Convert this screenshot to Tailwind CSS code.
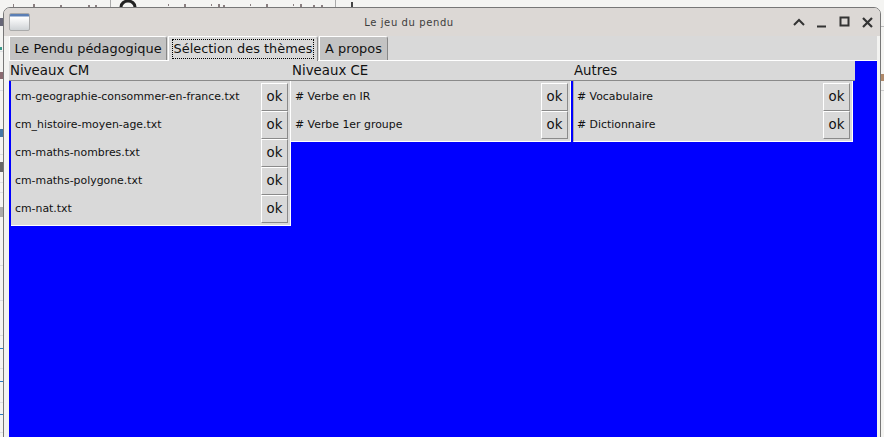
<!DOCTYPE html>
<html>
<head>
<meta charset="utf-8">
<script src="https://cdn.jsdelivr.net/npm/@tailwindcss/browser@4"></script>
</head>
<body class="relative w-[884px] h-[437px] overflow-hidden bg-[#f4f4f2] font-['DejaVu_Sans',sans-serif]">
<!-- desktop behind -->
<svg class="absolute left-0 top-0" width="884" height="437">
  <g fill="#8a7f80">
    <rect x="13" y="4" width="1" height="3"/><rect x="33" y="4" width="2" height="3"/><rect x="60" y="5" width="2" height="2"/>
    <rect x="88" y="5" width="2" height="2"/><rect x="95" y="5" width="2" height="2"/><rect x="168" y="4" width="1" height="2"/>
    <rect x="184" y="4" width="2" height="3"/><rect x="211" y="4" width="1" height="2"/><rect x="218" y="4" width="2" height="3"/>
    <rect x="223" y="5" width="2" height="2"/><rect x="250" y="4" width="1" height="2"/><rect x="266" y="4" width="2" height="3"/>
    <rect x="293" y="4" width="1" height="2"/><rect x="300" y="4" width="2" height="3"/><rect x="313" y="5" width="2" height="2"/><rect x="321" y="5" width="2" height="2"/>
  </g>
  <rect x="110" y="0" width="1" height="7" fill="#aaa"/>
  <path d="M121 7 A7 6 0 0 1 135 7" fill="none" stroke="#222" stroke-width="3"/>
  <rect x="335" y="0" width="1" height="7" fill="#aaa"/>
  <rect x="351" y="2" width="2" height="5" fill="#444"/>
  <g fill="#dcdfe2">
    <rect x="0" y="51" width="3" height="1"/><rect x="0" y="90" width="3" height="1"/><rect x="0" y="154" width="3" height="1"/>
    <rect x="0" y="182" width="3" height="1"/><rect x="0" y="192" width="3" height="1"/>
    <rect x="0" y="265" width="3" height="1"/><rect x="0" y="300" width="3" height="1"/><rect x="0" y="335" width="3" height="1"/><rect x="0" y="368" width="3" height="1"/><rect x="0" y="402" width="3" height="1"/><rect x="0" y="432" width="3" height="1"/>
  </g>
  <rect x="0" y="18" width="3" height="8" fill="#667"/>
  <rect x="0" y="47" width="2" height="3" fill="#3a9a8a"/>
  <rect x="0" y="72" width="3" height="7" fill="#8a6a70"/>
  <rect x="0" y="129" width="3" height="8" fill="#4477a6"/>
  <rect x="0" y="162" width="3" height="10" fill="#666"/>
  <rect x="0" y="207" width="3" height="10" fill="#aaa"/>
  <g fill="#2a7ac0">
    <rect x="0" y="348" width="3" height="1"/><rect x="0" y="381" width="3" height="1"/><rect x="0" y="414" width="3" height="1"/>
  </g>
  <rect x="881" y="74" width="3" height="7" fill="#b08a6a"/>
  <rect x="881" y="26" width="3" height="1" fill="#bbb"/>
  <rect x="881" y="90" width="3" height="1" fill="#ccc"/>
</svg>
<!-- window -->
<div class="absolute left-[3px] top-[7px] w-[878px] h-[440px] flex flex-col rounded-t-[7px] border border-[#777] bg-[#f3f3f1] overflow-hidden">
  <div class="relative h-[28px] shrink-0 bg-[#dcd8d5] flex items-center justify-center pr-[66px] pt-[1px]">
    <div class="absolute left-[5px] top-[5px] w-[21px] h-[18px] rounded-[2px] border border-[#aaa] bg-[linear-gradient(#5b7fb5_0_2px,#fff_3px,#cfd3d6)]"></div>
    <span class="text-[10px] text-[#3c3c3c] tracking-[0.6px]">Le jeu du pendu</span>
    <svg class="absolute left-[784px] top-0" width="90" height="28" fill="none" stroke="#333" stroke-width="2">
      <path d="M6 17 L11 12 L16 17"/>
      <path d="M29 18.500 H38"/>
      <rect x="52.500" y="9.500" width="8" height="8"/>
      <path d="M75 10 L84 19 M84 10 L75 19" stroke-width="2.200"/>
    </svg>
  </div>
  <div class="ml-[5px] mr-[3px] flex-1 flex flex-col min-h-0">
    <!-- tabs -->
    <div class="h-[25px] shrink-0 bg-[#d9d9d9] flex items-end gap-[1px] border-b border-white relative">
      <div class="h-[24px] w-[158px] shrink-0 flex items-center justify-center whitespace-nowrap bg-[#c3c3c3] border-t border-l border-r border-white border-r-[#888] rounded-tr-[3px] text-[12.9px] text-[#111]"><span>Le Pendu pédagogique</span></div>
      <div class="h-[25px] -mb-px w-[150px] shrink-0 flex items-center justify-center whitespace-nowrap bg-[#d9d9d9] border-t border-l border-r border-white border-r-[#888] rounded-tr-[3px] text-[12.9px] text-[#111]"><span class="border border-dotted border-black px-px leading-[18px]">Sélection des thèmes</span></div>
      <div class="h-[24px] w-[69px] shrink-0 flex items-center justify-center whitespace-nowrap bg-[#c3c3c3] border-t border-l border-r border-white border-r-[#888] rounded-tr-[3px] text-[12.9px] text-[#111]"><span>A propos</span></div>
    </div>
    <!-- content -->
    <div class="flex-1 bg-[#0000ff] min-h-0">
      <div class="w-[846px] h-[20px] bg-[#d9d9d9] border-b border-[#8a8a8a] grid grid-cols-[282px_282px_282px] items-center text-[13.33px] text-[#111]">
        <span class="pl-[1px]">Niveaux CM</span>
        <span class="pl-[1px]">Niveaux CE</span>
        <span class="pl-[1px]">Autres</span>
      </div>
      <div class="flex items-start">
        <div class="ml-[2px] w-[280px] bg-[#d9d9d9] border-r border-b border-white pt-[2px] pb-[2px] flex flex-col">
          <div class="flex items-center h-[28px] pl-[4px] pr-[2px] justify-between text-[10.9px] text-[#111]"><span>cm-geographie-consommer-en-france.txt</span><button class="w-[27px] h-[28px] bg-[#d9d9d9] border border-white border-r-[#8a8a8a] border-b-[#8a8a8a] text-[13.33px] text-[#111]">ok</button></div>
          <div class="flex items-center h-[28px] pl-[4px] pr-[2px] justify-between text-[10.9px] text-[#111]"><span>cm_histoire-moyen-age.txt</span><button class="w-[27px] h-[28px] bg-[#d9d9d9] border border-white border-r-[#8a8a8a] border-b-[#8a8a8a] text-[13.33px] text-[#111]">ok</button></div>
          <div class="flex items-center h-[28px] pl-[4px] pr-[2px] justify-between text-[10.9px] text-[#111]"><span>cm-maths-nombres.txt</span><button class="w-[27px] h-[28px] bg-[#d9d9d9] border border-white border-r-[#8a8a8a] border-b-[#8a8a8a] text-[13.33px] text-[#111]">ok</button></div>
          <div class="flex items-center h-[28px] pl-[4px] pr-[2px] justify-between text-[10.9px] text-[#111]"><span>cm-maths-polygone.txt</span><button class="w-[27px] h-[28px] bg-[#d9d9d9] border border-white border-r-[#8a8a8a] border-b-[#8a8a8a] text-[13.33px] text-[#111]">ok</button></div>
          <div class="flex items-center h-[28px] pl-[4px] pr-[2px] justify-between text-[10.9px] text-[#111]"><span>cm-nat.txt</span><button class="w-[27px] h-[28px] bg-[#d9d9d9] border border-white border-r-[#8a8a8a] border-b-[#8a8a8a] text-[13.33px] text-[#111]">ok</button></div>
        </div>
        <div class="w-[280px] bg-[#d9d9d9] border-r border-b border-white pt-[2px] pb-[2px] flex flex-col">
          <div class="flex items-center h-[28px] pl-[4px] pr-[2px] justify-between text-[10.9px] text-[#111]"><span># Verbe en IR</span><button class="w-[27px] h-[28px] bg-[#d9d9d9] border border-white border-r-[#8a8a8a] border-b-[#8a8a8a] text-[13.33px] text-[#111]">ok</button></div>
          <div class="flex items-center h-[28px] pl-[4px] pr-[2px] justify-between text-[10.9px] text-[#111]"><span># Verbe 1er groupe</span><button class="w-[27px] h-[28px] bg-[#d9d9d9] border border-white border-r-[#8a8a8a] border-b-[#8a8a8a] text-[13.33px] text-[#111]">ok</button></div>
        </div>
        <div class="ml-[2px] w-[280px] bg-[#d9d9d9] border-l border-l-[#aaa] border-r border-b border-white pt-[2px] pb-[2px] flex flex-col">
          <div class="flex items-center h-[28px] pl-[3px] pr-[2px] justify-between text-[10.9px] text-[#111]"><span># Vocabulaire</span><button class="w-[27px] h-[28px] bg-[#d9d9d9] border border-white border-r-[#8a8a8a] border-b-[#8a8a8a] text-[13.33px] text-[#111]">ok</button></div>
          <div class="flex items-center h-[28px] pl-[3px] pr-[2px] justify-between text-[10.9px] text-[#111]"><span># Dictionnaire</span><button class="w-[27px] h-[28px] bg-[#d9d9d9] border border-white border-r-[#8a8a8a] border-b-[#8a8a8a] text-[13.33px] text-[#111]">ok</button></div>
        </div>
      </div>
    </div>
  </div>
</div>
</body>
</html>
